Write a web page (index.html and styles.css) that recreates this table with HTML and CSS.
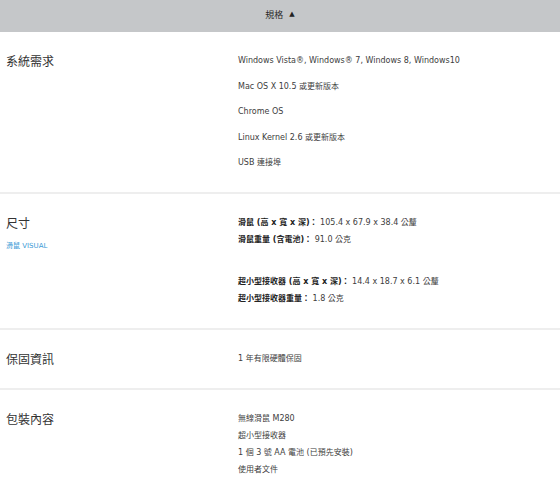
FILE: index.html
```html
<!DOCTYPE html>
<html lang="zh-Hant">
<head>
<meta charset="utf-8">
<title>規格</title>
<link rel="stylesheet" href="styles.css">
</head>
<body>
<div class="specs">
  <div class="specs-header">規格 <span class="caret">▲</span></div>

  <div class="spec-row">
    <div class="spec-label">
      <h3 class="spec-title">系統需求</h3>
    </div>
    <ul class="spec-list spaced">
      <li>Windows Vista®, Windows® 7, Windows 8, Windows10</li>
      <li>Mac OS X 10.5 或更新版本</li>
      <li>Chrome OS</li>
      <li>Linux Kernel 2.6 或更新版本</li>
      <li>USB 連接埠</li>
    </ul>
  </div>

  <div class="spec-row">
    <div class="spec-label">
      <h3 class="spec-title">尺寸</h3>
      <a class="spec-link" href="#">滑鼠 VISUAL</a>
    </div>
    <ul class="spec-list">
      <li><b>滑鼠 (高 x 寬 x 深)：</b> 105.4 x 67.9 x 38.4 公釐</li>
      <li><b>滑鼠重量 (含電池)：</b> 91.0 公克</li>
      <li class="blank"></li>
      <li><b>超小型接收器 (高 x 寬 x 深)：</b> 14.4 x 18.7 x 6.1 公釐</li>
      <li><b>超小型接收器重量：</b> 1.8 公克</li>
    </ul>
  </div>

  <div class="spec-row">
    <div class="spec-label">
      <h3 class="spec-title">保固資訊</h3>
    </div>
    <ul class="spec-list">
      <li>1 年有限硬體保固</li>
    </ul>
  </div>

  <div class="spec-row">
    <div class="spec-label">
      <h3 class="spec-title">包裝內容</h3>
    </div>
    <ul class="spec-list">
      <li>無線滑鼠 M280</li>
      <li>超小型接收器</li>
      <li>1 個 3 號 AA 電池 (已預先安裝)</li>
      <li>使用者文件</li>
    </ul>
  </div>
</div>
</body>
</html>
```

FILE: styles.css
```css
* { box-sizing: border-box; }
html, body { margin: 0; padding: 0; background: #fff; }
body {
  font-family: "DejaVu Sans", "Noto Sans CJK TC", sans-serif;
  color: #3d3d3d;
}
.specs { width: 560px; }
.specs-header {
  height: 32px;
  background: #c5c7c9;
  display: flex;
  align-items: center;
  justify-content: center;
  font-size: 9px;
  color: #2a2a2a;
  padding-bottom: 4px;
}
.caret { font-size: 7px; margin-left: 6px; color: #222; }
.spec-row {
  display: flex;
  padding: 20px 0 21px;
  border-bottom: 2px solid #eeeeee;
}
.spec-label { width: 238px; padding-left: 6px; }
.spec-title {
  margin: 0;
  font-family: "Noto Sans CJK TC", sans-serif;
  font-weight: 400;
  font-size: 12px;
  line-height: 17px;
  color: #333;
}
.spec-link {
  display: block;
  margin-top: 10px;
  font-size: 7px;
  line-height: 10px;
  color: #3a9ad6;
  text-decoration: none;
}
.spec-list {
  list-style: none;
  margin: 0;
  padding: 0;
  font-size: 8px;
  line-height: 17px;
  display: flex;
  flex-direction: column;
}
.spec-list.spaced { gap: 8.5px; }
.spec-list b { font-weight: 700; color: #222; }
.spec-list .blank { height: 25px; }
```
